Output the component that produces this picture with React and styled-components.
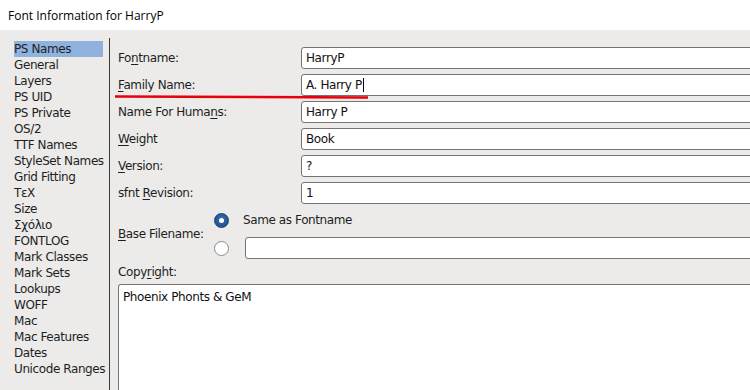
import styled, { createGlobalStyle } from 'styled-components'

const GlobalStyle = createGlobalStyle`
    html, body {
        margin: 0;
        padding: 0;
        width: 750px;
        height: 390px;
        overflow: hidden;
        background: #ecebe9;
    }
    * {
        box-sizing: border-box;
    }
`

const Window = styled.div`
    width: 750px;
    height: 390px;
    display: flex;
    flex-direction: column;
    font-family: "DejaVu Sans", Verdana, sans-serif;
    font-size: 12px;
    letter-spacing: -0.4px;
    color: #1e1e1e;
    overflow: hidden;
`

const TitleBar = styled.div`
    height: 30px;
    flex: none;
    background: #ffffff;
    display: flex;
    align-items: center;
    padding-left: 8px;
    font-family: "Open Sans", "Noto Sans", sans-serif;
    font-size: 12px;
    letter-spacing: 0;
    color: #000;
`

const Body = styled.div`
    flex: 1;
    display: flex;
    min-height: 0;
`

const Sidebar = styled.ul`
    list-style: none;
    margin: 0;
    padding: 11px 0 0 14px;
    width: 109px;
    flex: none;
`

const Item = styled.li`
    height: 16px;
    line-height: 16px;
    width: 89px;
    white-space: nowrap;
    background: ${props => props.active ? '#8fb3de' : 'transparent'};
`

const Divider = styled.div`
    width: 1px;
    margin-top: 8px;
    background: #3a3a3a;
    flex: none;
`

const Panel = styled.div`
    flex: 1;
    padding: 17px 0 0 8px;
    display: flex;
    flex-direction: column;
    min-width: 0;
`

const Row = styled.div`
    position: relative;
    display: flex;
    align-items: center;
    height: 22px;
    margin-bottom: 5px;
`

const Label = styled.div`
    width: ${props => props.width || 183}px;
    flex: none;
    white-space: nowrap;
`

const Field = styled.div`
    height: 22px;
    width: 520px;
    flex: none;
    background: #fff;
    border: 1px solid #747474;
    border-radius: 3px;
    display: flex;
    align-items: center;
    padding-left: 4px;
    white-space: nowrap;
    color: #111;
`

const Caret = styled.span`
    display: inline-block;
    width: 1px;
    height: 14px;
    margin-left: 1px;
    background: #000;
`

const Mark = styled.svg`
    position: absolute;
    left: -3px;
    top: 21px;
    width: 254px;
    height: 4px;
    overflow: visible;
`

const BaseRow = styled.div`
    display: flex;
    align-items: center;
    margin-top: 0px;
`

const Choices = styled.div`
    display: flex;
    flex-direction: column;
    gap: 6px;
`

const Choice = styled.div`
    display: flex;
    align-items: center;
    height: 22px;
    gap: ${props => props.gap}px;
`

const Radio = styled.span`
    width: 15px;
    height: 15px;
    border-radius: 50%;
    flex: none;
    position: relative;
    border: 1px solid ${props => props.checked ? '#173e72' : '#8a8a8a'};
    background: ${props => props.checked
        ? 'radial-gradient(circle at 50% 40%, #3a6db0 0%, #1f4f8f 80%)'
        : '#fff'};

    &::after {
        content: '';
        display: ${props => props.checked ? 'block' : 'none'};
        position: absolute;
        left: 4px;
        top: 4px;
        width: 5px;
        height: 5px;
        border-radius: 50%;
        background: #fff;
    }
`

const Copyright = styled.div`
    margin-top: 4px;
    height: 18px;
    display: flex;
    align-items: center;
`

const TextArea = styled.div`
    margin-top: 3px;
    flex: 1;
    width: 640px;
    background: #fff;
    border: 1px solid #747474;
    border-bottom: none;
    border-radius: 3px 3px 0 0;
    padding: 5px 4px;
    line-height: 15px;
    color: #111;
`

const Key = styled.span`
    text-decoration: underline;
    text-underline-offset: 2px;
`

const pages = [
    'PS Names', 'General', 'Layers', 'PS UID', 'PS Private', 'OS/2',
    'TTF Names', 'StyleSet Names', 'Grid Fitting', 'TεX', 'Size', 'Σχόλιο',
    'FONTLOG', 'Mark Classes', 'Mark Sets', 'Lookups', 'WOFF', 'Mac',
    'Mac Features', 'Dates', 'Unicode Ranges',
]

const App = () => {
    return (
        <>
            <GlobalStyle />
            <Window>
                <TitleBar>Font Information for HarryP</TitleBar>
                <Body>
                    <Sidebar>
                        {pages.map((p, i) => (
                            <Item key={p} active={i === 0}>{p}</Item>
                        ))}
                    </Sidebar>
                    <Divider />
                    <Panel>
                        <Row>
                            <Label>Fo<Key>n</Key>tname:</Label>
                            <Field>HarryP</Field>
                        </Row>
                        <Row>
                            <Label><Key>F</Key>amily Name:</Label>
                            <Field>A. Harry P<Caret /></Field>
                            <Mark viewBox="0 0 254 4">
                                <line x1="0" y1="1.5" x2="253" y2="2.5" stroke="#e8000b" strokeWidth="2.6" />
                            </Mark>
                        </Row>
                        <Row>
                            <Label>Name For Huma<Key>n</Key>s:</Label>
                            <Field>Harry P</Field>
                        </Row>
                        <Row>
                            <Label><Key>W</Key>eight</Label>
                            <Field>Book</Field>
                        </Row>
                        <Row>
                            <Label><Key>V</Key>ersion:</Label>
                            <Field>?</Field>
                        </Row>
                        <Row>
                            <Label>sfnt <Key>R</Key>evision:</Label>
                            <Field>1</Field>
                        </Row>
                        <BaseRow>
                            <Label width={96}><Key>B</Key>ase Filename:</Label>
                            <Choices>
                                <Choice gap={14}>
                                    <Radio checked />
                                    <span>Same as Fontname</span>
                                </Choice>
                                <Choice gap={16}>
                                    <Radio />
                                    <Field>&nbsp;</Field>
                                </Choice>
                            </Choices>
                        </BaseRow>
                        <Copyright>Copy<Key>r</Key>ight:</Copyright>
                        <TextArea>Phoenix Phonts &amp; GeM</TextArea>
                    </Panel>
                </Body>
            </Window>
        </>
    )
}

export default App
